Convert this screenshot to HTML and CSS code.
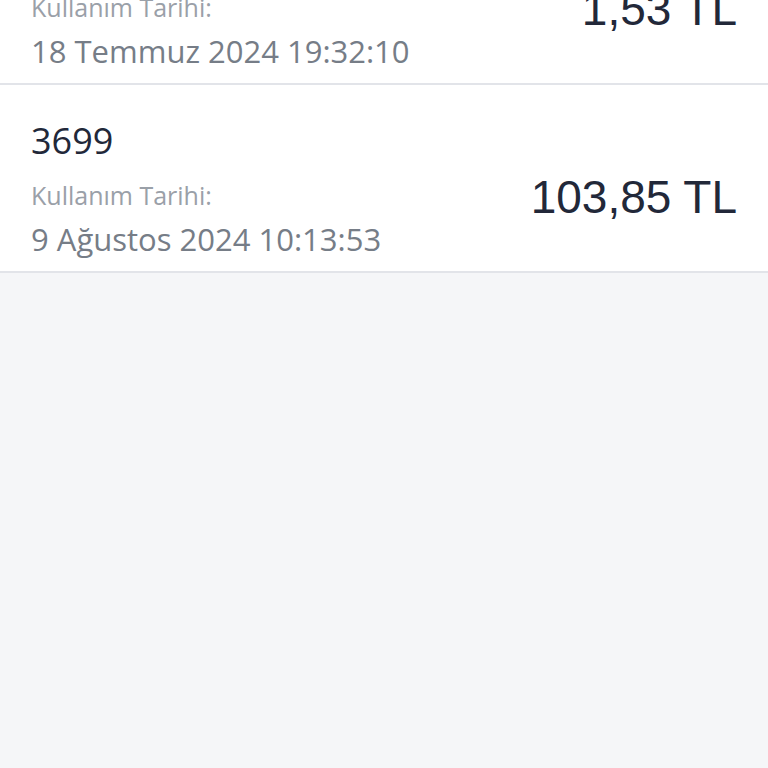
FILE: index.html
```html
<!DOCTYPE html>
<html lang="tr">
<head>
  <meta charset="UTF-8">
  <title>Kullanım Geçmişi</title>
  <meta name="viewport" content="width=device-width, initial-scale=1">
  <link rel="stylesheet" href="styles.css">
</head>
<body>

  <ul class="usage-list">
    <li class="usage-item">
      <div class="usage-info">
        <div class="usage-code">2417</div>
        <div class="usage-label">Kullanım Tarihi:</div>
        <div class="usage-date">18 Temmuz 2024 19:32:10</div>
      </div>
      <div class="usage-amount">1,53 TL</div>
    </li>
    <li class="usage-item">
      <div class="usage-info">
        <div class="usage-code">3699</div>
        <div class="usage-label">Kullanım Tarihi:</div>
        <div class="usage-date">9 Ağustos 2024 10:13:53</div>
      </div>
      <div class="usage-amount">103,85 TL</div>
    </li>
  </ul>

</body>
</html>
```

FILE: styles.css
```css
:root {
  --text-dark: #222839;
  --text-muted: #9aa0a8;
  --text-date: #767d87;
  --line: #e2e4e9;
  --page-bg: #f5f6f8;
}

html, body {
  height: 100%;
}

body {
  margin: 0;
  background: var(--page-bg);
  font-family: 'Open Sans', 'Noto Sans', sans-serif;
  overflow: hidden;
}

/* list is scrolled so the first row is partly hidden */
.usage-list {
  list-style: none;
  margin: -103px 0 0;
  padding: 0;
}

.usage-item {
  display: flex;
  align-items: flex-start;
  justify-content: space-between;
  height: 150px;
  padding: 36px 31px 0;
  background: #ffffff;
  border-bottom: 2px solid var(--line);
}

.usage-info {
  display: flex;
  flex-direction: column;
}

.usage-code {
  font-size: 36px;
  line-height: 40px;
  color: var(--text-dark);
  margin-bottom: 20px;
}

.usage-label {
  font-size: 25px;
  line-height: 28px;
  color: var(--text-muted);
  margin-bottom: 13px;
}

.usage-date {
  font-size: 31px;
  line-height: 34px;
  color: var(--text-date);
}

.usage-amount {
  font-family: 'Liberation Sans', 'Roboto', sans-serif;
  font-size: 46px;
  line-height: 50px;
  color: var(--text-dark);
  margin-top: 51px;
}
```
